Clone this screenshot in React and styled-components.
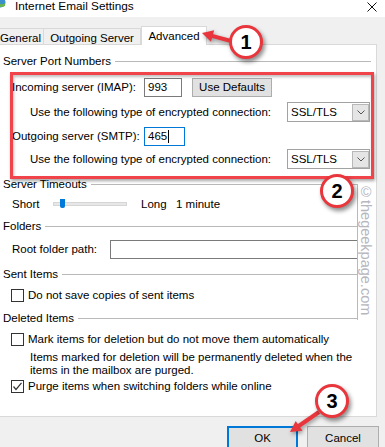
import React from 'react';
import styled, { createGlobalStyle } from 'styled-components';

const Global = createGlobalStyle`
  html, body { margin: 0; padding: 0; }
  body {
    background: #f0f0f0;
    font-family: "Liberation Sans", Arial, sans-serif;
    font-size: 11.5px;
    color: #000;
    overflow: hidden;
  }
  * { box-sizing: border-box; }
`;

const Window = styled.div`
  position: relative;
  width: 385px;
  height: 447px;
  overflow: hidden;
  background: #f0f0f0;
`;

const TitleBar = styled.div`
  height: 17px;
  background: #fff;
  display: flex;
  align-items: flex-start;
`;

const AppIcon = styled.svg`
  margin-left: -5px;
  margin-top: -3px;
  flex: none;
`;

const Title = styled.div`
  margin-left: 9px;
  margin-top: 0px;
  font-size: 11.8px;
  line-height: 12px;
  white-space: nowrap;
`;

const Close = styled.svg`
  margin-left: auto;
  margin-right: 8px;
  margin-top: 2px;
  flex: none;
`;

const TabStrip = styled.div`
  height: 27px;
  display: flex;
  align-items: flex-end;
  position: relative;
  z-index: 2;
`;

const Tab = styled.div`
  flex: none;
  width: ${p => p.$w}px;
  height: ${p => (p.$active ? 19 : 16)}px;
  margin-left: ${p => p.$ml || 0}px;
  margin-bottom: ${p => (p.$active ? -1 : 0)}px;
  background: ${p => (p.$active ? '#fff' : '#f0f0f0')};
  border: 1px solid #d9d9d9;
  border-bottom: none;
  display: flex;
  align-items: center;
  justify-content: center;
  padding-top: ${p => (p.$active ? 0 : 2)}px;
  white-space: nowrap;
  position: relative;
  z-index: ${p => (p.$active ? 2 : 1)};
`;

const Panel = styled.div`
  margin-left: -1px;
  width: 378px;
  height: 373px;
  background: #fff;
  border: 1px solid #d9d9d9;
  padding: 8px 5px 0 3px;
  display: flex;
  flex-direction: column;
`;

const GroupHeader = styled.div`
  display: flex;
  align-items: center;
  height: 16px;
  margin-top: ${p => p.$mt || 0}px;
  gap: 4px;
  white-space: nowrap;
`;

const GroupLine = styled.div`
  flex: 1;
  height: 1px;
  background: #b9b9b9;
  margin-top: 1px;
`;

const Row = styled.div`
  display: flex;
  align-items: center;
  height: ${p => p.$h || 20}px;
  margin-top: ${p => p.$mt || 0}px;
  padding-left: ${p => p.$indent || 0}px;
  white-space: nowrap;
`;

const Label = styled.div`
  flex: none;
  width: ${p => (p.$w ? `${p.$w}px` : 'auto')};
  margin-left: ${p => p.$ml || 0}px;
`;

const TextBox = styled.div`
  flex: ${p => (p.$w ? 'none' : '1')};
  width: ${p => (p.$w ? `${p.$w}px` : 'auto')};
  height: 19px;
  border: 1px solid ${p => (p.$focus ? '#0078d7' : '#7a7a7a')};
  background: #fff;
  padding-left: 3px;
  display: flex;
  align-items: center;
`;

const Caret = styled.span`
  display: inline-block;
  width: 1px;
  height: 13px;
  background: #000;
  margin-left: 1px;
`;

const Button = styled.div`
  flex: none;
  width: ${p => p.$w}px;
  height: ${p => p.$h || 23}px;
  margin-left: ${p => p.$ml || 0}px;
  background: #e1e1e1;
  border: ${p => (p.$primary ? '2px solid #0078d7' : '1px solid #adadad')};
  display: flex;
  align-items: center;
  justify-content: center;
`;

const Select = styled.div`
  flex: none;
  width: 83px;
  height: 20px;
  border: 1px solid #a2a2a2;
  background: #fff;
  display: flex;
  align-items: center;
  padding-left: 3px;
`;

const SelectText = styled.span`
  flex: 1;
`;

const DropButton = styled.div`
  width: 17px;
  height: 17px;
  background: #e5e5e5;
  border: 1px solid #b8b8b8;
  display: flex;
  align-items: center;
  justify-content: center;
`;

const Track = styled.div`
  position: relative;
  flex: none;
  width: 74px;
  height: 4px;
  background: #e7e7e7;
  border: 1px solid #d6d6d6;
`;

const Thumb = styled.div`
  position: absolute;
  left: 6px;
  top: -4px;
  width: 5px;
  height: 9px;
  background: #0078d7;
  border-radius: 0 0 2px 2px;
`;

const Check = styled.div`
  flex: none;
  width: 13px;
  height: 13px;
  margin-left: 8px;
  margin-right: 4px;
  border: 1px solid #333;
  background: #fff;
  display: flex;
  align-items: center;
  justify-content: center;
`;

const Note = styled.div`
  margin-top: ${p => p.$mt || 0}px;
  padding-left: 27px;
  line-height: 13px;
  height: 26px;
`;

const Footer = styled.div`
  display: flex;
  justify-content: flex-end;
  gap: 9px;
  padding-right: 6px;
  margin-top: 9px;
`;

const RedBox = styled.div`
  position: absolute;
  left: 10px;
  top: 72px;
  width: 364px;
  height: 107px;
  border: 3px solid #f0434a;
  box-shadow: 1px 2px 3px rgba(0, 0, 0, 0.35), inset 1px 2px 3px rgba(0, 0, 0, 0.25);
  pointer-events: none;
  z-index: 4;
`;

const Watermark = styled.div`
  position: absolute;
  left: 357px;
  top: 184px;
  width: 17px;
  height: 136px;
  background: #fff;
  border-left: 1px solid #b9b9b9;
  writing-mode: vertical-rl;
  font-size: 14.5px;
  line-height: 16px;
  color: #b6b6be;
  z-index: 3;
  white-space: nowrap;
`;

const Badge = styled.div`
  position: absolute;
  left: ${p => p.$x - 17}px;
  top: ${p => p.$y - 17}px;
  width: 34px;
  height: 34px;
  border-radius: 50%;
  border: 3px solid #e8363c;
  background: #fff;
  box-shadow: 2px 3px 4px rgba(0, 0, 0, 0.45);
  display: flex;
  align-items: center;
  justify-content: center;
  font-size: 20px;
  font-weight: bold;
  z-index: 6;
`;

const ArrowLayer = styled.svg`
  position: absolute;
  left: 0;
  top: 0;
  pointer-events: none;
  z-index: 5;
  filter: drop-shadow(1px 2px 2px rgba(0, 0, 0, 0.4));
`;

const Chevron = () => (
  <svg width="8" height="5" viewBox="0 0 8 5">
    <path d="M0.5 0.5 L4 4 L7.5 0.5" fill="none" stroke="#555" strokeWidth="1" />
  </svg>
);

const CheckMark = () => (
  <svg width="11" height="11" viewBox="0 0 11 11">
    <path d="M1.5 5.5 L4 8.5 L9.5 1.8" fill="none" stroke="#333" strokeWidth="1.2" />
  </svg>
);

const SslSelect = () => (
  <Select>
    <SelectText>SSL/TLS</SelectText>
    <DropButton>
      <Chevron />
    </DropButton>
  </Select>
);

export default function App() {
  return (
    <>
      <Global />
      <Window>
        <TitleBar>
          <AppIcon width="11" height="11" viewBox="0 0 11 11">
            <circle cx="5.5" cy="5.5" r="5" fill="#3a8fd0" />
            <path d="M3 2 Q6 4 5 7 Q8 8 10 6 L10 9 Q6 11 3 9 Z" fill="#6bb84a" />
          </AppIcon>
          <Title>Internet Email Settings</Title>
          <Close width="10" height="10" viewBox="0 0 10 10">
            <path d="M0.5 0.5 L9.5 9.5 M9.5 0.5 L0.5 9.5" stroke="#111" strokeWidth="1" />
          </Close>
        </TitleBar>

        <TabStrip>
          <Tab $w={47} $ml={-3}>General</Tab>
          <Tab $w={98} $ml={-1}>Outgoing Server</Tab>
          <Tab $w={66} $active>Advanced</Tab>
        </TabStrip>

        <Panel>
          <GroupHeader>
            <span>Server Port Numbers</span>
            <GroupLine />
          </GroupHeader>
          <Row $mt={8} $indent={9}>
            <Label $w={132}>Incoming server (IMAP):</Label>
            <TextBox $w={38}>993</TextBox>
            <Button $w={80} $h={19} $ml={10}>Use Defaults</Button>
          </Row>
          <Row $mt={5} $indent={27}>
            <Label $w={257}>Use the following type of encrypted connection:</Label>
            <SslSelect />
          </Row>
          <Row $mt={4} $indent={9}>
            <Label $w={132}>Outgoing server (SMTP):</Label>
            <TextBox $w={41} $focus>
              465<Caret />
            </TextBox>
          </Row>
          <Row $mt={3} $indent={27}>
            <Label $w={257}>Use the following type of encrypted connection:</Label>
            <SslSelect />
          </Row>

          <GroupHeader $mt={7}>
            <span>Server Timeouts</span>
            <GroupLine />
          </GroupHeader>
          <Row $h={16} $mt={4} $indent={9}>
            <Label $w={41}>Short</Label>
            <Track>
              <Thumb />
            </Track>
            <Label $w={35} $ml={14}>Long</Label>
            <Label>1 minute</Label>
          </Row>

          <GroupHeader $mt={6}>
            <span>Folders</span>
            <GroupLine />
          </GroupHeader>
          <Row $mt={5} $indent={9}>
            <Label $w={98}>Root folder path:</Label>
            <TextBox />
          </Row>

          <GroupHeader $mt={7}>
            <span>Sent Items</span>
            <GroupLine />
          </GroupHeader>
          <Row $h={16} $mt={5}>
            <Check />
            <span>Do not save copies of sent items</span>
          </Row>

          <GroupHeader $mt={7}>
            <span>Deleted Items</span>
            <GroupLine />
          </GroupHeader>
          <Row $h={16} $mt={5}>
            <Check />
            <span>Mark items for deletion but do not move them automatically</span>
          </Row>
          <Note $mt={4}>
            Items marked for deletion will be permanently deleted when the
            <br />
            items in the mailbox are purged.
          </Note>
          <Row $h={16} $mt={1}>
            <Check>
              <CheckMark />
            </Check>
            <span>Purge items when switching folders while online</span>
          </Row>
        </Panel>

        <Footer>
          <Button $w={71} $primary>OK</Button>
          <Button $w={72}>Cancel</Button>
        </Footer>

        <RedBox />
        <Watermark>©thegeekpage.com</Watermark>

        <ArrowLayer width="385" height="447" viewBox="0 0 385 447">
          <line x1="231" y1="41" x2="211" y2="35.6" stroke="#e8363c" strokeWidth="4" />
          <polygon points="202,33 214.2,30.2 211,41.7" fill="#e8363c" />
          <line x1="319" y1="412" x2="298" y2="426.5" stroke="#e8363c" strokeWidth="4" />
          <polygon points="290,432 302.5,430.7 295.7,420.9" fill="#e8363c" />
        </ArrowLayer>

        <Badge $x={246} $y={42}>1</Badge>
        <Badge $x={337} $y={191}>2</Badge>
        <Badge $x={332} $y={401}>3</Badge>
      </Window>
    </>
  );
}
